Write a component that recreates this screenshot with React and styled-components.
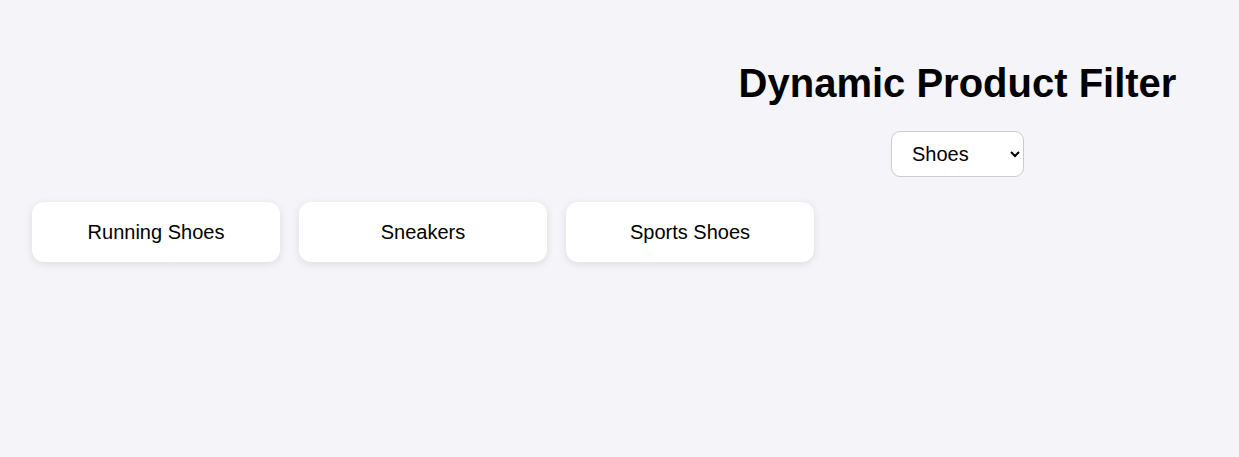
import React, { useState } from "react";
import styled, { createGlobalStyle } from "styled-components";

const GlobalStyle = createGlobalStyle`
  body {
    margin: 0;
    background-color: #f4f4f9;
    font-family: "Liberation Sans", Arial, sans-serif;
    color: #000;
  }
`;

const Page = styled.div`
  padding: 60px 32px;
`;

const Header = styled.div`
  width: 499px;
  margin-left: auto;
  display: flex;
  flex-direction: column;
  align-items: center;
`;

const Title = styled.h1`
  margin: 0;
  font-size: 40px;
  font-weight: 700;
  line-height: 46px;
`;

const Select = styled.select`
  margin-top: 25px;
  width: 133px;
  height: 46px;
  padding: 10px 16px;
  font-size: 20px;
  font-family: "Liberation Sans", Arial, sans-serif;
  border: 1px solid #ccc;
  border-radius: 9px;
  background: #fff;
  color: #000;
`;

const ProductList = styled.div`
  margin-top: 25px;
  display: flex;
  gap: 19px;
`;

const Card = styled.div`
  width: 248px;
  height: 60px;
  display: flex;
  align-items: center;
  justify-content: center;
  background: #fff;
  border-radius: 12px;
  box-shadow: 0 2px 8px rgba(0, 0, 0, 0.1);
  font-size: 20px;
`;

const products = {
  Shoes: ["Running Shoes", "Sneakers", "Sports Shoes"],
  Clothing: ["T-Shirt", "Jeans", "Jacket"],
  Accessories: ["Watch", "Belt", "Hat"],
};

const App = () => {
  const [category, setCategory] = useState("Shoes");

  return (
    <>
      <GlobalStyle />
      <Page>
        <Header>
          <Title>Dynamic Product Filter</Title>
          <Select value={category} onChange={(e) => setCategory(e.target.value)}>
            {Object.keys(products).map((c) => (
              <option key={c} value={c}>
                {c}
              </option>
            ))}
          </Select>
        </Header>
        <ProductList>
          {products[category].map((p) => (
            <Card key={p}>{p}</Card>
          ))}
        </ProductList>
      </Page>
    </>
  );
};

export default App;
